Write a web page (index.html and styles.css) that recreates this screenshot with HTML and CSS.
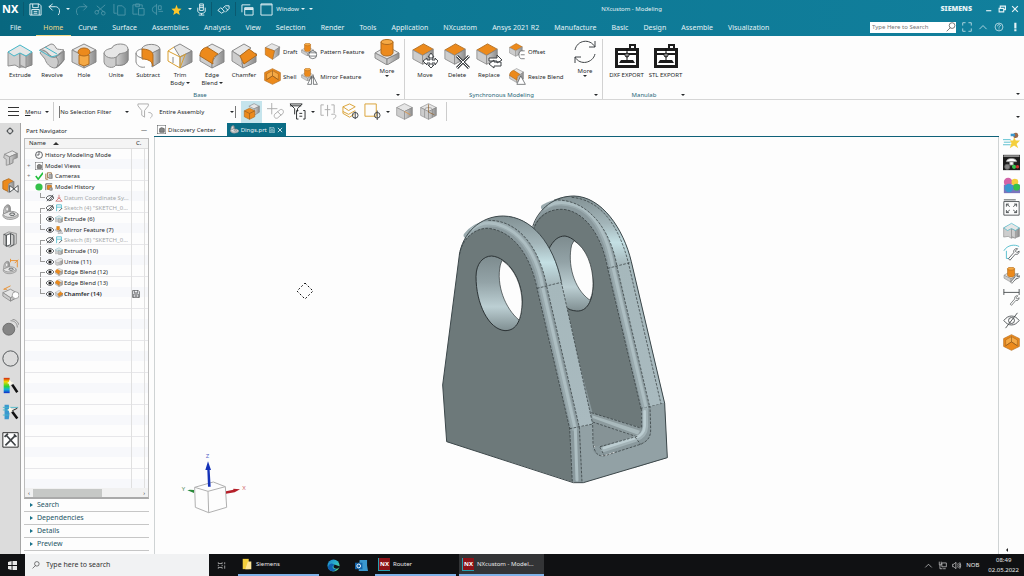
FILE: index.html
```
<!DOCTYPE html>
<html lang="en">
<head>
  <meta charset="UTF-8" />
  <meta name="viewport" content="width=device-width, initial-scale=1" />
  <title>NXcustom - Modeling</title>
  <link rel="stylesheet" href="styles.css">
</head>
<body>
  <svg class="sprite" aria-hidden="true">
    <defs>
      <linearGradient id="steel" x1="0" y1="0" x2="1" y2="0">
        <stop offset="0" stop-color="#d0d0d0" /><stop offset="1" stop-color="#8c8c8c" />
      </linearGradient>
      <linearGradient id="bore" x1="0" y1="0" x2="0" y2="1">
        <stop offset="0" stop-color="#7d8b8e" /><stop offset=".35" stop-color="#93a3a7" />
        <stop offset=".68" stop-color="#bccfd3" /><stop offset="1" stop-color="#7f8e91" />
      </linearGradient>
      <linearGradient id="rim" x1="0" y1="0" x2="0" y2="1">
        <stop offset="0" stop-color="#829194" /><stop offset=".13" stop-color="#a3b5b9" />
        <stop offset=".22" stop-color="#c4e0e4" /><stop offset=".32" stop-color="#a6b8bc" />
        <stop offset="1" stop-color="#a9babf" />
      </linearGradient>
      <linearGradient id="heat" x1="0" y1="0" x2="0" y2="1">
        <stop offset="0" stop-color="#d21f10" /><stop offset=".25" stop-color="#f5d800" />
        <stop offset=".55" stop-color="#2fd62f" /><stop offset=".75" stop-color="#12b8d8" />
        <stop offset="1" stop-color="#1227c8" />
      </linearGradient>
      <linearGradient id="edge" x1="0" y1="0" x2="1" y2="1">
        <stop offset="0" stop-color="#1b7fd0" /><stop offset=".5" stop-color="#2bb5c9" /><stop offset="1" stop-color="#6bd66a" />
      </linearGradient>
    </defs>

    <symbol id="cube" viewBox="0 0 26 26">
      <path class="top" d="M13 1 25 7 13 13 1 7z" /><path class="left" d="M1 7l12 6v12L1 19z" /><path class="right" d="M25 7l-12 6v12l12-6z" /><path class="line orange-line" d="M13 13l9 5" />
    </symbol>
    <symbol id="cube-round" viewBox="0 0 26 26">
      <path class="top" d="M13 1 25 7 13 13 1 7z" /><path class="left" d="M1 7l12 6v12L1 19z" /><path class="right" d="M25 7l-12 6v12l12-6z" />
      <path class="line" d="M7 10v12M19 10v12M7 10c0-4 12-4 12 0" /><path class="line brown" d="M13 2v12l9 4" />
    </symbol>
    <symbol id="cube-stack" viewBox="0 0 26 26">
      <path class="top" d="M9 5l8-4 8 4-8 4z" /><path class="right" d="M25 5v9l-8 5V9z" /><path class="orange" d="M2 12l8-4 8 4v9l-8 4-8-4z" /><path class="line brown" d="M2 12l8 4 8-4M10 16v9" />
    </symbol>
    <symbol id="orange-top" viewBox="0 0 26 26">
      <path class="orange" d="M13 1l11 6-12 7L1 8z" /><path class="left" d="M1 8l11 6v10L1 18z" /><path class="right" d="M24 7l-12 7v10l12-6z" />
    </symbol>
    <symbol id="extrude" viewBox="0 0 26 26">
      <path class="left" d="M1 9l7-3 5 4v15l-5-3-7 1z" /><path class="right" d="M13 10l12-1v13l-6 2-6 0z" /><path class="left" d="M13 10l6 3v12l-6-3z" />
      <path class="top cyan" d="M1 9 13 2l12 7-6 4-6-3-6 3z" />
    </symbol>
    <symbol id="revolve" viewBox="0 0 26 26">
      <path class="left" d="M1 10c2-4 6-2 8 1s6 4 8 3l8-6v9c-2 3-5 7-9 8-5 0-9-5-10-9z" /><path class="top" d="M1 7 12 1c3 0 4 2 5 4s5 1 8 2l-9 7c-6 1-7-8-15-7z" />
      <path class="line cyan" d="M0 7l12 7 12-3M6 4l12 7" /><path class="right" d="M25 8v9l-8 8c3-4 3-8 0-11z" />
    </symbol>
    <symbol id="hole" viewBox="0 0 26 26">
      <path class="top" d="M13 1 25 7 13 13 1 7z" /><path class="left" d="M1 7l12 6v12L1 19z" /><path class="right" d="M25 7l-12 6v12l12-6z" />
      <path class="amber" d="M8 12h10v9l-5 2-5-2z" /><ellipse class="orange" cx="13" cy="9" rx="6" ry="4" />
    </symbol>
    <symbol id="unite" viewBox="0 0 26 26">
      <path class="left" d="M1 10v9c1 6 10 7 12 3 4 1 11 0 12-5V6z" /><path class="right" d="M13 13v9c4 1 11 0 12-5V6z" />
      <path class="top" d="M1 10c1-4 6-4 8-5 1-5 16-6 16 1 0 4-6 4-9 5-2 6-14 5-15-1z" />
    </symbol>
    <symbol id="subtract" viewBox="0 0 26 26">
      <path class="top" d="M7 5c3-5 17-5 18 1l-8 5-10-4z" /><path class="right" d="M25 6v13l-8 5V10z" /><path class="orange" d="M7 6c5 0 11 2 11 6v11c-1-5-5-7-11-7z" />
      <path class="line" d="M7 6c-8 1-8 8 1 9M1 10v9c1 4 5 6 9 5" />
    </symbol>
    <symbol id="trim" viewBox="0 0 26 26">
      <path class="top" d="M7 4l6-3 12 7-12 6z" /><path class="right" d="M25 8v11l-12 6V14z" />
      <path class="line gold" d="M7 4 1 8v10l12 7V14L1 8M13 14l6-3M13 25l5-13" /><path class="line" d="M6 14v6" />
    </symbol>
    <symbol id="blend" viewBox="0 0 26 26">
      <path class="top" d="M8 4l5-3 12 6-8 7z" /><path class="left" d="M1 12l12 8v5L1 18z" /><path class="right" d="M25 7v12l-12 6v-6l4-6z" /><path class="orange" d="M8 4l11 7c-4 2-6 5-5 10L1 13c0-5 3-8 7-9z" />
    </symbol>
    <symbol id="chamfer" viewBox="0 0 26 26">
      <path class="top" d="M1 8 13 1l7 4L9 13z" /><path class="left" d="M1 8l9 6 2 11L1 18z" /><path class="right" d="M25 10v9l-13 6-1-5z" /><path class="orange" d="M18 6l8 6-13 9-4-8z" />
    </symbol>
    <symbol id="draft" viewBox="0 0 26 26">
      <path class="top" d="M2 7 12 1l12 5-8 6z" /><path class="right" d="M24 6l-1 12-10 7 3-13z" /><path class="orange" d="M2 7l14 5-3 13-11-7z" />
    </symbol>
    <symbol id="shell" viewBox="0 0 26 26">
      <path class="orange" d="M13 1l12 6v12l-12 6L1 19V7z" /><path class="amber" d="M13 4l9 5v9l-9-6-9 6V9z" /><path class="line brown" d="M13 4v8M4 18l9-6 9 6" />
    </symbol>
    <symbol id="boss" viewBox="0 0 26 26">
      <path class="top" d="M13 7l12 7-12 6-12-6z" /><path class="left" d="M1 14l12 6v6L1 19z" /><path class="right" d="M25 14l-12 6v6l12-7z" />
      <path class="orange" d="M7 3v11c1 4 11 4 12 0V3z" /><ellipse class="amber" cx="13" cy="3" rx="6" ry="2.500" />
    </symbol>
    <symbol id="pattern" viewBox="0 0 26 26">
      <use href="#boss" width="20" height="20" /><circle class="paper dark" cx="18" cy="18" r="6" /><path class="line dark" d="M12 15h12M12 20h12" />
    </symbol>
    <symbol id="mirror" viewBox="0 0 26 26">
      <use href="#boss" width="20" height="20" /><path class="paper dark" d="M16 13v12h-6zM19 13v12h6z" />
    </symbol>
    <symbol id="move" viewBox="0 0 26 26">
      <use href="#orange-top" width="23" height="23" /><path class="paper dark" d="M19 10l3 4h-2v3h3v-2l3 3-3 4v-2h-3v2h2l-3 3-3-3h2v-2h-3v2l-4-4 4-3v2h3v-3h-2z" />
    </symbol>
    <symbol id="delete" viewBox="0 0 26 26">
      <use href="#orange-top" width="23" height="23" /><path class="line dark wide-line" d="M13 13l12 12M25 13L13 25" /><path class="halo" d="M13 13l12 12M25 13L13 25" />
    </symbol>
    <symbol id="replace" viewBox="0 0 26 26">
      <use href="#orange-top" width="23" height="23" /><path class="paper dark" d="M13 15h8v-3l5 5-5 3v-2h-8zM25 19h-7v-2l-5 4 5 4v-2h7z" />
    </symbol>
    <symbol id="offset" viewBox="0 0 26 26">
      <use href="#orange-top" width="22" height="22" /><path class="paper dark" d="M24 12h-5c-5 0-5 12 0 12h5" /><path class="line dark" d="M18 18h6" />
    </symbol>
    <symbol id="resize" viewBox="0 0 26 26">
      <use href="#blend" width="23" height="23" /><path class="paper dark" d="M18 12l7 13H12z" />
    </symbol>
    <symbol id="cycle" viewBox="0 0 26 26">
      <path class="line dark" d="M3 11C5 1 18-1 23 8M23 2v6h-6M23 15c-2 9-15 12-20 3M3 24v-6h6" />
    </symbol>
    <symbol id="printer" viewBox="0 0 26 26">
      <path class="black-fill" d="M1 5h24v20H1zM15 1h7v5h-2V3h-3v3h-2z" /><path class="clear" d="M4 8h18v2H4zM4 12h18v10H4z" />
      <path class="black-fill" d="M7 17h12l2 3H5z" /><circle class="paper black" cx="13" cy="12" r="2" /><path class="line black" d="M13 7v10M13 8V5" />
    </symbol>

    <symbol id="save" viewBox="0 0 14 14"><path class="stroke" d="M1 1h10l2 2v10H1zM4 1v4h6V1M3 13V7h8v6M5 9h4M5 11h4" /></symbol>
    <symbol id="undo" viewBox="0 0 14 14"><path class="stroke" d="M5 1 1 4l4 4M1 4h7c4 0 6 5 3 9" /></symbol>
    <symbol id="redo" viewBox="0 0 14 14"><path class="stroke" d="M9 1l4 3-4 4M13 4H6c-4 0-6 5-3 9" /></symbol>
    <symbol id="cut" viewBox="0 0 14 14"><path class="stroke" d="M12 2 4 9M3 3l8 7" /><circle class="stroke" cx="3" cy="10" r="2" /><circle class="stroke" cx="10" cy="11" r="2" /></symbol>
    <symbol id="copy" viewBox="0 0 14 14"><path class="stroke" d="M1 1v10h3M5 3h5l3 3v7H5z" /></symbol>
    <symbol id="paste" viewBox="0 0 14 14"><path class="stroke" d="M6 12H1V2h10v3M4 1h4v3H4zM7 6h6v7H7z" /></symbol>
    <symbol id="repeat" viewBox="0 0 14 14"><path class="stroke" d="M6 1v12M6 3C0 3 0 11 6 11M8 3h3v4H8zM8 9h5" /></symbol>
    <symbol id="star" viewBox="0 0 14 14"><path class="star" d="M7 2l1.500 4 4 .3-3 2.500 1 4L7 10.700 3.500 12.800l1-4-3-2.500 4-.3z" /></symbol>
    <symbol id="mic" viewBox="0 0 14 14"><path class="stroke" d="M5 1h4v7H5zM3 5v4c1 3 7 3 8 0V5M7 11v2M4 13h6M5 3h4M5 5h4" /></symbol>
    <symbol id="link" viewBox="0 0 14 14"><path class="stroke" d="M1 8l3-3 4 4-3 2zM6 6l3-3h4v3l-4 4M9 5l3 3" /></symbol>
    <symbol id="cascade" viewBox="0 0 14 14"><path class="stroke" d="M1 10V2h9M4 5h9v8H4zM4 7h9M4 6h9" /></symbol>
    <symbol id="frame" viewBox="0 0 14 14"><path class="stroke" d="M1 1h12v12H1zM1 2h12" /></symbol>
    <symbol id="full" viewBox="0 0 14 14"><path class="stroke" d="M1 5V1h4M9 1h4v4M13 9v4H9M5 13H1V9" /></symbol>
    <symbol id="up" viewBox="0 0 14 14"><path class="stroke" d="M2 10l5-5 5 5" /></symbol>
    <symbol id="help" viewBox="0 0 14 14"><circle class="stroke" cx="7" cy="7" r="5.500" /><path class="stroke" d="M5 6c0-3 4-3 4-1 0 1-2 1-2 3M7 9v1.500" /></symbol>
    <symbol id="bang" viewBox="0 0 14 14"><path class="fill" d="M6 1h3v8H6zM6 10h3v3H6z" /></symbol>
    <symbol id="min" viewBox="0 0 14 14"><path class="fill" d="M2 9h9v2H2z" /></symbol>
    <symbol id="restore" viewBox="0 0 14 14"><path class="stroke bold" d="M4 5V2h9v6h-3M2 6h8v6H2z" /></symbol>
    <symbol id="close" viewBox="0 0 14 14"><path class="stroke bold" d="M2 2l10 10M12 2L2 12" /></symbol>
    <symbol id="lens" viewBox="0 0 14 14"><circle class="stroke" cx="8.500" cy="5" r="4" /><path class="stroke" d="M6 8l-5 5" /></symbol>

    <symbol id="funnel" viewBox="0 0 18 18"><path class="stroke" d="M1 1h11v2L8 8v7l-3-2V8L1 3zM12 10c5 0 5 4 2 6" /></symbol>
    <symbol id="snap" viewBox="0 0 18 18"><path class="stroke" d="M0 6h11M5 0v12M8 12l6-5c3-1 4 2 3 4l-6 5c-3 1-4-2-3-4zM11 9l4 4" /></symbol>
    <symbol id="funnel-box" viewBox="0 0 18 18"><path class="stroke" d="M1 1h13l-5 5v3M1 1l5 5v6M1 3h12M10 8h-2v9h2M15 8h2v9h-2M11 11h3M11 14h3" /></symbol>
    <symbol id="brackets" viewBox="0 0 18 18"><path class="stroke" d="M4 2H1v11h3M5 7h6M8 2v12M12 2h3v9M12 12c6-1 6 3 2 5" /></symbol>
    <symbol id="wire" viewBox="0 0 18 18"><path class="line gold" d="M1 4l7-3 6 3-7 4zM1 4v7l7 4 5-3M1 9l6 3 7-4" /><circle class="line dark" cx="14" cy="13" r="3" /><path class="line dark" d="M14 9v8" /></symbol>
    <symbol id="rect" viewBox="0 0 18 18"><path class="line gold" d="M1 1h12v13H1z" /><circle class="line dark" cx="14" cy="13" r="3" /><path class="line dark" d="M14 8v10" /></symbol>

    <symbol id="gear" viewBox="0 0 20 20"><circle class="line dark thick" cx="10" cy="10" r="5" /><path class="line dark" d="M10 2v4M10 14v4M2 10h4M14 10h4" /></symbol>
    <symbol id="assembly" viewBox="0 0 20 20"><path class="left" d="M3 5l6 3v9l-4 1v-7l-3-2z" /><path class="top" d="M3 5l9-4 6 3-9 4z" /><path class="right" d="M18 4v5l-5 2v4l-4 2V8z" /></symbol>
    <symbol id="constraint" viewBox="0 0 20 20"><path class="orange" d="M1 5l7-3 5 3v9l-6 3-6-3z" /><path class="right" d="M8 8l6-3v9l-7 4z" /><path class="paper dark" d="M9 10v8l10-8v8z" /></symbol>
    <symbol id="part" viewBox="0 0 20 20">
      <path class="right" d="M2 13C1 8 3 1 7 1c3 0 3 4 3 8l-1 4z" /><ellipse class="paper" cx="6" cy="6" rx="1.500" ry="2.500" />
      <path class="left" d="M1 13c0 6 12 7 18 2v-3L8 9z" /><path class="top" d="M1 12l7-3c4-1 9 0 11 3-4 5-16 5-18 0z" /><ellipse class="line dark" cx="12" cy="12" rx="3" ry="1.500" />
    </symbol>
    <symbol id="book" viewBox="0 0 20 20"><path class="left" d="M2 4l6-3 9 2v12l-8 4-7-3z" /><path class="paper dark" d="M5 5l5-2v13l-5 2z" /><path class="line dark" d="M2 4l3 1v13M10 3l4 2v11l-4 2" /></symbol>
    <symbol id="part-new" viewBox="0 0 20 20"><use href="#part" y="3" width="18" height="17" /><path class="line orange-line" d="M10 3h8v8M10 1v4M15 6l4-4" /></symbol>
    <symbol id="tray" viewBox="0 0 20 20"><path class="top" d="M1 9l9-4 9 5-9 5z" /><path class="left" d="M1 9l9 6v4l-9-6z" /><path class="right" d="M19 10l-9 5v4l9-5z" /><path class="line orange-line" d="M2 5l8-4M2 5h4" /><circle class="paper" cx="16" cy="12" r="4" /></symbol>
    <symbol id="ball" viewBox="0 0 20 20"><circle class="grey-ball" cx="8" cy="12" r="7" /><path class="line" d="M10 2c5 0 8 3 8 8M12 0c5 1 7 4 8 7" /></symbol>
    <symbol id="clock-big" viewBox="0 0 20 20"><circle class="line dark" cx="10" cy="10" r="9" /></symbol>
    <symbol id="spectrum" viewBox="0 0 20 20"><path fill="url(#heat)" d="M2 1h7v18H2z" /><path class="star-light" d="M9 3l2 3 3 1-3 1-2 3-1-3-2-1 2-1z" /><path class="line black wide-line" d="M12 9l6 9" /></symbol>
    <symbol id="flow" viewBox="0 0 20 20"><path class="blue" d="M3 1h5l1 9-1 8H3z" /><path class="line cyan" d="M1 4h18M1 7h10M1 13h7" /><path class="star-light" d="M9 3l2 3 3 1-3 1-2 3-1-3-2-1 2-1z" /><path class="line black wide-line" d="M12 9l6 8" /><path class="line black" d="M12 8l6-3" /></symbol>
    <symbol id="tools" viewBox="0 0 20 20"><path class="paper black" d="M1 2h18v17H1z" /><path class="line dark thick" d="M4 17L15 6M5 5l11 12M3 7l4-4M14 4l3 3" /></symbol>

    <symbol id="runner" viewBox="0 0 20 20"><path class="line cyan" d="M0 9h9M1 12h8M0 15h9" /><path class="yellow" d="M13 6l2 4h5l-4 4 2 5-5-3-5 3 2-6-2-3h4z" /><circle class="brown-fill" cx="15" cy="4" r="3" /><path class="blue" d="M9 2h5v3H9z" /></symbol>
    <symbol id="render" viewBox="0 0 20 20"><path class="black-fill" d="M0 1h20v18H0z" /><path class="left" d="M1 2h18v1H1z" /><path class="paper" d="M4 9c0-5 12-5 12 0zM8 9h4v4H8z" /><circle class="green" cx="13" cy="15" r="2.500" /><circle class="red" cx="17" cy="15" r="2" /><circle class="grey-ball" cx="5" cy="15" r="3" /></symbol>
    <symbol id="balls" viewBox="0 0 20 20"><path class="violet" d="M1 9h19v10H1z" /><circle class="pink" cx="6" cy="6" r="5" /><circle class="yellow" cx="14" cy="6" r="4" /><circle class="green" cx="16" cy="12" r="4" /><circle class="blue" cx="7" cy="13" r="5" /></symbol>
    <symbol id="fit" viewBox="0 0 20 20"><path class="line dark" d="M1 3h18v16H1zM1 1h14M4 6l4 3M4 9V6h3M16 6l-4 3M16 9V6h-3M4 16l4-3M4 13v3h3M16 16l-4-3M16 13v3h-3" /></symbol>
    <symbol id="wrench" viewBox="0 0 20 20"><path class="paper dark" d="M6 17l7-8c-1-4 3-6 5-5l-3 3 2 2 3-2c0 4-3 5-5 4l-7 8z" /></symbol>
    <symbol id="sketch-wrench" viewBox="0 0 20 20"><path class="line cyan" d="M1 8C5 1 14 0 19 3M4 8v9h6" /><use href="#wrench" y="2" width="20" height="18" /></symbol>
    <symbol id="boss-wrench" viewBox="0 0 20 20"><use href="#boss" width="19" height="18" /><use href="#wrench" x="4" y="5" width="16" height="15" /></symbol>
    <symbol id="dim-wrench" viewBox="0 0 20 20"><path class="line dark" d="M1 0v7M19 0v7M1 4h18" /><use href="#wrench" x="3" y="5" width="17" height="15" /></symbol>
    <symbol id="hidden" viewBox="0 0 20 20"><path class="line dark" d="M1 10c5-7 13-7 18 0-5 7-13 7-18 0zM3 19L17 1" /><circle class="line dark" cx="10" cy="10" r="3.500" /></symbol>

    <symbol id="eye" viewBox="0 0 10 10"><path class="line dark" d="M0 5c3-4 7-4 10 0-3 4-7 4-10 0z" /><circle class="black-fill" cx="5" cy="5" r="2" /></symbol>
    <symbol id="eye-off" viewBox="0 0 10 10"><path class="line dark" d="M0 5c3-4 7-4 10 0-3 4-7 4-10 0zM1 9l8-8M4 9l5-6" /></symbol>
    <symbol id="clock" viewBox="0 0 10 10"><circle class="line dark" cx="5" cy="5" r="4.300" /><path class="line dark" d="M5 1v4H2" /></symbol>
    <symbol id="views" viewBox="0 0 10 10"><path class="paper dark" d="M0 0h10v10H0z" /><path class="grey-ball" d="M3 4l2-1 3 1v4H3z" /></symbol>
    <symbol id="check" viewBox="0 0 10 10"><path class="line green-line" d="M1 5l3 4 6-8" /></symbol>
    <symbol id="camera" viewBox="0 0 10 10"><path class="line brown" d="M1 2v7h3M3 1h5v6H3z" /><path class="right" d="M5 3h4v5H5z" /></symbol>
    <symbol id="led" viewBox="0 0 10 10"><circle class="green" cx="5" cy="5" r="4.500" /></symbol>
    <symbol id="history" viewBox="0 0 10 10"><path class="line dark" d="M1 9V1h8" /><path class="orange" d="M3 3h5v5H3z" /><path class="right" d="M6 6h3v3H6z" /></symbol>
    <symbol id="datum" viewBox="0 0 10 10"><path class="line red-line" d="M5 1v4L1 9h8L5 5M3 5h4" /></symbol>
    <symbol id="sketch" viewBox="0 0 10 10"><path class="line cyan" d="M2 9V1h6v5M2 4h6" /><path class="line dark" d="M5 9l4-4" /></symbol>
  </svg>

  <header class="titlebar">
    <div class="title-row">
      <div class="quick">
        <strong class="logo">NX</strong>
        <i class="bar"></i>
        <button aria-label="Save"><svg><use href="#save" /></svg></button>
        <button aria-label="Undo"><svg><use href="#undo" /></svg></button>
        <i class="caret"></i>
        <button class="faint" aria-label="Redo"><svg><use href="#redo" /></svg></button>
        <button class="faint" aria-label="Cut"><svg><use href="#cut" /></svg></button>
        <button class="faint" aria-label="Copy"><svg><use href="#copy" /></svg></button>
        <button class="faint" aria-label="Paste"><svg><use href="#paste" /></svg></button>
        <button class="faint" aria-label="Repeat"><svg><use href="#repeat" /></svg></button>
        <button class="favourites" aria-label="Favourites"><svg><use href="#star" /></svg></button>
        <i class="caret"></i>
        <button class="voice" aria-label="Voice"><svg><use href="#mic" /></svg></button>
        <i class="bar"></i>
        <button aria-label="Touch"><svg><use href="#link" /></svg></button>
        <i class="bar"></i>
        <button aria-label="Switch window"><svg><use href="#cascade" /></svg></button>
        <button class="window"><svg><use href="#frame" /></svg>Window <i class="caret"></i></button>
        <i class="caret"></i>
      </div>
      <h1>NXcustom - Modeling</h1>
      <div class="brand">
        <strong>SIEMENS</strong>
        <button aria-label="Minimize"><svg><use href="#min" /></svg></button>
        <button aria-label="Restore"><svg><use href="#restore" /></svg></button>
        <button aria-label="Close"><svg><use href="#close" /></svg></button>
      </div>
    </div>
    <div class="tab-row">
      <nav>
        <a href="#file" class="file">File</a>
        <a href="#home" class="current">Home</a>
        <a href="#curve">Curve</a>
        <a href="#surface">Surface</a>
        <a href="#assemblies">Assemblies</a>
        <a href="#analysis">Analysis</a>
        <a href="#view">View</a>
        <a href="#selection">Selection</a>
        <a href="#render">Render</a>
        <a href="#tools">Tools</a>
        <a href="#application">Application</a>
        <a href="#nxcustom">NXcustom</a>
        <a href="#ansys">Ansys 2021 R2</a>
        <a href="#manufacture">Manufacture</a>
        <a href="#basic">Basic</a>
        <a href="#design">Design</a>
        <a href="#assemble">Assemble</a>
        <a href="#visualization">Visualization</a>
      </nav>
      <div class="tab-tools">
        <label class="finder"><input type="search" placeholder="Type Here to Search" aria-label="Command finder" /><svg><use href="#lens" /></svg></label>
        <button aria-label="Full screen"><svg><use href="#full" /></svg></button>
        <button aria-label="Minimize ribbon"><svg><use href="#up" /></svg></button>
        <button aria-label="Help"><svg><use href="#help" /></svg></button>
        <button aria-label="Alerts"><svg><use href="#bang" /></svg></button>
      </div>
    </div>
  </header>

  <section class="ribbon">
    <div class="group base">
      <div class="tools">
        <button class="big"><svg><use href="#extrude" /></svg>Extrude</button>
        <button class="big"><svg><use href="#revolve" /></svg>Revolve</button>
        <button class="big"><svg><use href="#hole" /></svg>Hole</button>
        <button class="big"><svg><use href="#unite" /></svg>Unite</button>
        <button class="big"><svg><use href="#subtract" /></svg>Subtract</button>
        <button class="big"><svg><use href="#trim" /></svg>Trim<span>Body <i class="caret"></i></span></button>
        <button class="big"><svg><use href="#blend" /></svg>Edge<span>Blend <i class="caret"></i></span></button>
        <button class="big"><svg><use href="#chamfer" /></svg>Chamfer</button>
        <div class="stack">
          <button class="small"><svg><use href="#draft" /></svg>Draft</button>
          <button class="small"><svg><use href="#shell" /></svg>Shell</button>
        </div>
        <div class="stack">
          <button class="small"><svg><use href="#pattern" /></svg>Pattern Feature</button>
          <button class="small"><svg><use href="#mirror" /></svg>Mirror Feature</button>
        </div>
        <button class="big more"><svg><use href="#boss" /></svg>More<i class="caret"></i></button>
      </div>
      <footer><h2>Base</h2><i class="caret"></i></footer>
    </div>
    <div class="group sync">
      <div class="tools">
        <button class="big"><svg><use href="#move" /></svg>Move</button>
        <button class="big"><svg><use href="#delete" /></svg>Delete</button>
        <button class="big"><svg><use href="#replace" /></svg>Replace</button>
        <div class="stack">
          <button class="small"><svg><use href="#offset" /></svg>Offset</button>
          <button class="small"><svg><use href="#resize" /></svg>Resize Blend</button>
        </div>
        <button class="big more"><svg><use href="#cycle" /></svg>More<i class="caret"></i></button>
      </div>
      <footer><h2>Synchronous Modeling</h2><i class="caret"></i></footer>
    </div>
    <div class="group manulab">
      <div class="tools">
        <button class="big wide"><svg><use href="#printer" /></svg>DXF EXPORT</button>
        <button class="big wide"><svg><use href="#printer" /></svg>STL EXPORT</button>
      </div>
      <footer><h2>Manulab</h2><i class="caret"></i></footer>
    </div>
    <i class="caret ribbon-end"></i>
  </section>

  <section class="selection-bar">
    <button class="menu"><span class="burger"></span><span><u>M</u>enu</span><i class="caret"></i></button>
    <label class="picker"><select aria-label="Selection filter"><option>No Selection Filter</option></select><i class="caret"></i></label>
    <button class="dim" aria-label="Reset filter"><svg><use href="#funnel" /></svg></button>
    <label class="picker scope"><select aria-label="Selection scope"><option>Entire Assembly</option></select><i class="caret"></i></label>
    <button class="on" aria-label="Highlight hidden edges"><svg><use href="#cube-stack" /></svg></button>
    <button class="dim" aria-label="Snap"><svg><use href="#snap" /></svg></button>
    <button aria-label="Filter options"><svg><use href="#funnel-box" /></svg></button>
    <i class="caret"></i>
    <button class="dim" aria-label="Selection priority"><svg><use href="#brackets" /></svg></button>
    <button aria-label="Interior selection"><svg><use href="#wire" /></svg></button>
    <button aria-label="Rectangle selection"><svg><use href="#rect" /></svg></button>
    <i class="caret"></i>
    <button class="shade" aria-label="Shaded"><svg><use href="#cube" /></svg></button>
    <button class="shade" aria-label="Shaded with edges"><svg><use href="#cube-round" /></svg></button>
    <i class="bar"></i>
    <i class="caret bar-end"></i>
  </section>

  <main>
    <aside class="resources">
      <button class="gear" aria-label="Settings"><svg><use href="#gear" /></svg></button>
      <button aria-label="Assembly Navigator"><svg><use href="#assembly" /></svg></button>
      <button aria-label="Constraint Navigator"><svg><use href="#constraint" /></svg></button>
      <button class="active" aria-label="Part Navigator"><svg><use href="#part" /></svg></button>
      <button aria-label="Reuse Library"><svg><use href="#book" /></svg></button>
      <button aria-label="Feature templates"><svg><use href="#part-new" /></svg></button>
      <button aria-label="View Manager"><svg><use href="#tray" /></svg></button>
      <button class="apart" aria-label="Web Browser"><svg><use href="#ball" /></svg></button>
      <button aria-label="History"><svg><use href="#clock-big" /></svg></button>
      <button aria-label="System Materials"><svg><use href="#spectrum" /></svg></button>
      <button aria-label="Process Studio"><svg><use href="#flow" /></svg></button>
      <button aria-label="Roles"><svg><use href="#tools" /></svg></button>
    </aside>

    <section class="navigator">
      <div class="panel-title"><h2>Part Navigator</h2><button aria-label="Collapse">—</button></div>
      <div class="tree">
        <table>
          <thead><tr><th>Name <i class="sort"></i></th><th>C.</th><th></th></tr></thead>
          <tbody>
            <tr><td><div class="item root"><svg><use href="#clock" /></svg>History Modeling Mode</div></td><td></td><td></td></tr>
            <tr><td><div class="item root plus"><svg><use href="#views" /></svg>Model Views</div></td><td></td><td></td></tr>
            <tr><td><div class="item root plus"><svg><use href="#check" /></svg><svg><use href="#camera" /></svg>Cameras</div></td><td></td><td></td></tr>
            <tr><td><div class="item root"><svg><use href="#led" /></svg><svg><use href="#history" /></svg>Model History</div></td><td></td><td></td></tr>
            <tr class="off"><td><div class="item"><i class="branch last"></i><svg><use href="#eye-off" /></svg><svg><use href="#datum" /></svg>Datum Coordinate Sy...</div></td><td></td><td></td></tr>
            <tr class="off"><td><div class="item"><i class="branch first"></i><svg><use href="#eye-off" /></svg><svg><use href="#sketch" /></svg>Sketch (4) "SKETCH_0...</div></td><td></td><td></td></tr>
            <tr><td><div class="item"><i class="branch"></i><svg><use href="#eye" /></svg><svg><use href="#extrude" /></svg>Extrude (6)</div></td><td></td><td></td></tr>
            <tr><td><div class="item"><i class="branch last"></i><svg><use href="#eye" /></svg><svg><use href="#mirror" /></svg>Mirror Feature (7)</div></td><td></td><td></td></tr>
            <tr class="off"><td><div class="item"><i class="branch first"></i><svg><use href="#eye-off" /></svg><svg><use href="#sketch" /></svg>Sketch (8) "SKETCH_0...</div></td><td></td><td></td></tr>
            <tr><td><div class="item"><i class="branch"></i><svg><use href="#eye" /></svg><svg><use href="#extrude" /></svg>Extrude (10)</div></td><td></td><td></td></tr>
            <tr><td><div class="item"><i class="branch last"></i><svg><use href="#eye" /></svg><svg><use href="#unite" /></svg>Unite (11)</div></td><td></td><td></td></tr>
            <tr><td><div class="item"><i class="branch first"></i><svg><use href="#eye" /></svg><svg><use href="#blend" /></svg>Edge Blend (12)</div></td><td></td><td></td></tr>
            <tr><td><div class="item"><i class="branch"></i><svg><use href="#eye" /></svg><svg><use href="#blend" /></svg>Edge Blend (13)</div></td><td></td><td></td></tr>
            <tr class="latest"><td><div class="item"><i class="branch last"></i><svg><use href="#eye" /></svg><svg><use href="#chamfer" /></svg>Chamfer (14)</div></td><td><svg><use href="#save" /></svg></td><td></td></tr>
          </tbody>
        </table>
        <div class="scroll"><span>‹</span><i></i><span>›</span></div>
      </div>
      <ul class="sections">
        <li><button>Search</button></li>
        <li><button>Dependencies</button></li>
        <li><button>Details</button></li>
        <li><button>Preview</button></li>
      </ul>
    </section>

    <section class="graphics">
      <div class="documents">
        <a href="#discovery"><svg><use href="#views" /></svg>Discovery Center</a>
        <a href="#dings" class="open"><svg><use href="#part" /></svg>Dings.prt <svg class="tiny"><use href="#save" /></svg><svg class="tiny"><use href="#close" /></svg></a>
      </div>
      <div class="canvas">
        <svg class="model" viewBox="0 0 810 960" role="img" aria-label="Clevis bracket">
          <!-- rear lug -->
          <path class="round" d="M338 145C355 85 405 48 462 48 545 50 610 145 634 245L734 670 742 833 640 865 520 760 400 240z" />
          <path class="shine-wide" d="M372 82C405 62 440 66 468 76 530 100 562 175 577 262L678 690" />
          <path class="shine" d="M385 77C410 64 440 66 468 76 530 100 564 175 579 262L680 690" />
          <path fill="url(#rim)" d="M402 60C510 55 575 160 591 260L689 682 734 670 634 245C610 145 545 50 462 48 438 48 416 52 402 60z" />
          <path class="face" d="M338 150C350 105 385 87 430 88 495 95 545 165 563 265L663 685 665 745 518 700 400 260z" />
          <path class="seam" d="M340 150C355 105 390 86 430 88 495 95 545 165 563 265L663 685M402 60C510 55 575 160 591 260L689 680" />
          <path class="seam" d="M563 265L634 247M661 686L734 670M455 52C550 60 600 150 625 248L723 672" />
          <path class="bore" d="M386 208C400 180 415 168 435 168 480 175 518 250 519 310 519 365 500 395 470 393 455 392 445 388 436 380L415 300z" />
          <path class="void" d="M462 182C500 205 519 260 519 310 519 335 515 350 509 360 460 325 442 250 455 195z" />
          <!-- slot floor -->
          <path class="slope" d="M514 698L668 745 652 776 518 726z" />
          <path class="slope-light" d="M516 706L660 752 654 764 518 714z" />
          <path class="floor" d="M518 726L650 774 655 795 545 815 518 795z" />
          <path class="seam" d="M514 698L665 745M518 726L650 770" />
          <!-- end face -->
          <path class="end" d="M480 742L518 730 520 790C524 820 535 830 555 827L655 795C685 785 693 770 692 745L690 680 734 670 742 833 490 908 480 906z" />
          <path class="lip" d="M677 686L678 740C678 762 669 774 648 781L552 812C540 815 533 812 528 800" />
          <path class="lip-mid" d="M675 690L676 740C675 760 666 770 646 777L550 808" />
          <path class="lip-shine" d="M674 694L674 738C673 758 664 768 644 775L552 804" />
          <path class="seam" d="M518 735L519 790C524 822 535 830 555 827L655 795C685 785 693 770 692 745L690 680M665 686L665 745M645 771L663 794M540 800L655 768M540 802L553 827" />
          <!-- front lug -->
          <path class="round" d="M118 225C128 160 180 108 250 108 335 110 400 190 424 305L518 732 480 742 486 908 457 906 300 400z" />
          <path class="shine-wide" d="M140 166C170 128 215 124 250 139 312 165 352 235 366 322L463 744" />
          <path class="shine" d="M155 148C185 124 220 126 250 139 312 165 354 235 368 322L465 744" />
          <path fill="url(#rim)" d="M205 121C300 120 360 210 380 318L478 742 518 732 424 307C400 190 335 110 250 108 232 108 217 113 205 121z" />
          <path class="face" d="M80 785L68 615 118 225C125 180 160 145 202 145 275 150 330 220 351 325L449 745 457 906z" />
          <path class="shine" d="M466 748L471 900" />
          <path class="seam" d="M118 225C125 180 160 145 202 145 275 150 330 220 351 325L449 745 457 905M205 121C300 120 360 210 380 318L478 742 486 906" />
          <path class="seam" d="M351 325L424 307M449 746L518 732M424 307L518 732" />
          <path class="bore" d="M168 290C168 250 190 228 215 228 265 232 306 300 306 360 306 420 290 452 255 452 205 448 168 370 168 290z" />
          <path class="void" d="M246 241C285 265 306 320 306 365 306 390 302 408 297 420 255 385 228 315 241 255z" />
          <path class="outline" d="M118 225L68 615 80 785 460 908 490 908 742 833 734 670 634 245C610 145 545 50 462 48 405 48 355 85 338 140M118 225C128 160 180 108 250 108 335 110 400 190 424 305" />
        </svg>
        <svg class="cursor" viewBox="0 0 18 18"><path class="line black" d="M9 1l8 8-8 8-8-8z" /></svg>
        <svg class="triad" viewBox="540 450 210 200" role="img" aria-label="View triad">
          <path class="box" d="M584 562L640 546 676 560 624 574zL586 622 626 638 680 622 676 560M624 574L626 638" />
          <path class="axis-z" d="M624 560L622 510 616 510 624 484 633 510 629 510 632 560z" />
          <path class="axis-x" d="M678 574L700 569 700 566 720 568 704 577 678 581z" />
          <path class="axis-y" d="M582 570L570 569 562 571 582 579z" />
          <text class="z" x="617" y="474">Z</text><text class="x" x="727" y="570">X</text><text class="y" x="545" y="572">Y</text>
        </svg>
      </div>
    </section>

    <aside class="shortcuts">
      <button aria-label="Start"><svg><use href="#runner" /></svg></button>
      <button aria-label="Render"><svg><use href="#render" /></svg></button>
      <button aria-label="Materials"><svg><use href="#balls" /></svg></button>
      <button aria-label="Fit"><svg><use href="#fit" /></svg></button>
      <button aria-label="Extrude"><svg><use href="#extrude" /></svg></button>
      <button aria-label="Edit sketch"><svg><use href="#sketch-wrench" /></svg></button>
      <button aria-label="Edit feature"><svg><use href="#boss-wrench" /></svg></button>
      <button aria-label="Edit dimension"><svg><use href="#dim-wrench" /></svg></button>
      <button aria-label="Hide"><svg><use href="#hidden" /></svg></button>
      <button aria-label="Shell"><svg><use href="#shell" /></svg></button>
      <i class="expand"></i>
    </aside>
  </main>

  <footer class="taskbar">
    <button class="start" aria-label="Start menu"><svg viewBox="0 0 10 10"><path class="fill" d="M0 1l4-1v4.500H0zM5 0h5v4.500H5zM0 5.500h4V10L0 9zM5 5.500h5V10H5z" /></svg></button>
    <label class="finder"><svg><use href="#lens" /></svg><input type="search" placeholder="Type here to search" aria-label="Windows search" /></label>
    <button class="view" aria-label="Task View"><svg viewBox="0 0 14 14"><path class="stroke" d="M2 2v2h6V2M2 12v-2h6v2M2 6v2M8 6v2M12 2v3M12 7v5" /></svg></button>
    <button class="task"><svg viewBox="0 0 14 14"><path class="yellow" d="M2 1h7v12H2z" /><path class="folder" d="M8 4h4v9H5z" /></svg>Siemens</button>
    <button class="pin" aria-label="Edge"><svg viewBox="0 0 14 14"><circle fill="url(#edge)" cx="7" cy="7" r="6.500" /><path class="deep" d="M1 9c1-5 6-5 7-2-3 0-3 4 2 4-3 4-9 2-9-2z" /><path class="cut-out" d="M7 8c1-1 1-2 1-2l6 2-2 2c-2 1-5 0-5-2z" /></svg></button>
    <button class="pin" aria-label="Outlook"><svg viewBox="0 0 14 14"><path class="blue" d="M5 1h8v6l1 6H4z" /><path class="navy" d="M0 4h8v7H0z" /><circle class="ring" cx="4" cy="7.500" r="2" /></svg></button>
    <button class="task nx"><span class="tile">NX</span>Router</button>
    <button class="task nx focused"><span class="tile">NX</span>NXcustom - Model...</button>
    <div class="tray">
      <svg><use href="#up" /></svg>
      <svg viewBox="0 0 14 14"><path class="stroke" d="M2 1v5h3V1M3 6v6h4M6 3h7v6H6zM8 12h4" /></svg>
      <svg viewBox="0 0 14 14"><path class="stroke" d="M1 5h2l3-3v10L3 9H1zM8 4c2 2 2 4 0 6M10 3c3 2 3 6 0 8M12 2c2 3 2 7 0 10" /></svg>
      <span>NOB</span>
      <time>08:49<br>02.05.2022</time>
    </div>
  </footer>
</body>
</html>
```

FILE: styles.css
```
* {
  box-sizing: border-box;
}

body {
  margin: 0;
  height: 100vh;
  display: flex;
  flex-direction: column;
  overflow: hidden;
  background: #fdfdfd;
  color: #26292b;
  font: 6px/8px "Noto Sans", "Open Sans", sans-serif;
}

h1, h2, ul {
  margin: 0;
  padding: 0;
  font: inherit;
  list-style: none;
}

button, input, select {
  margin: 0;
  padding: 0;
  border: 0;
  background: none;
  color: inherit;
  font: inherit;
}

button {
  display: flex;
  align-items: center;
  justify-content: center;
  flex: none;
}

a {
  color: inherit;
  text-decoration: none;
}

svg {
  display: block;
  flex: none;
  overflow: visible;
}

.sprite {
  position: absolute;
  width: 0;
  height: 0;
}

.caret {
  flex: none;
  border: 2px solid transparent;
  border-top-color: currentColor;
  border-bottom: 0;
}

/* icon paint */
.top { fill: #e6e6e6; stroke: #8b8b8b; }
.left { fill: #cdcdcd; stroke: #909090; }
.right { fill: url(#steel); stroke: #868686; }
.orange { fill: #ec8a1c; stroke: #b06a1c; }
.amber { fill: #f5a945; stroke: #b06a1c; }
.paper { fill: #fff; stroke: #999; }
.clear { fill: #fff; }
.line { fill: none; stroke: #888; }
.dark { stroke: #3f4346; }
.black { stroke: #111; }
.cyan { stroke: #45b7c9; }
.gold { stroke: #d9a032; }
.brown { stroke: #8e5a22; }
.orange-line { stroke: #ea8a25; }
.green-line { stroke: #1fbf3a; stroke-width: 2; }
.red-line { stroke: #d07070; }
.thick { stroke-width: 2; }
.wide-line { stroke-width: 3; }
.halo { fill: none; stroke: #fff; }
.black-fill { fill: #1c1c1c; }
.brown-fill { fill: #9b6a4c; }
.grey-ball { fill: #858585; stroke: #666; }
.green { fill: #35c14a; }
.red { fill: #c33; }
.yellow { fill: #f4cf3c; }
.folder { fill: #ffe694; }
.blue { fill: #3a98cf; }
.deep { fill: #0f5fae; }
.cut-out { fill: #101113; }
.navy { fill: #1463a8; }
.pink { fill: #d264a8; }
.violet { fill: #7a74bd; }
.ring { fill: none; stroke: #fff; }
.stroke { fill: none; stroke: currentColor; }
.bold { stroke-width: 2; }
.fill { fill: currentColor; }
.star { fill: #ffc629; }
.star-light { fill: #fffbe8; }

/* title bar */
.titlebar {
  flex: none;
  background: linear-gradient(90deg, #08677f, #0d7894 40%, #117f9c);
  color: #e6f3f6;
}

.title-row, .tab-row {
  display: flex;
  align-items: center;
  height: 18px;
}

.quick {
  flex: 1;
  display: flex;
  align-items: center;
  gap: 6px;
  padding-left: 2px;
}

.titlebar svg {
  width: 13px;
  height: 13px;
}

.logo {
  font-size: 11px;
  color: #fff;
}

.bar {
  width: 1px;
  height: 14px;
  background: #0a5a70;
}

.quick .bar, .quick .caret {
  margin: 0 -1px;
}

.quick .voice {
  margin: 0 -2px;
}

.faint {
  opacity: .3;
}

.window {
  gap: 3px;
}

.brand {
  display: flex;
  align-items: center;
  justify-content: flex-end;
  gap: 5px;
  width: 362px;
  padding-right: 5px;
}

.brand strong {
  margin-right: 8px;
  font-size: 7px;
  font-weight: 900;
}

.brand svg {
  width: 8px;
  height: 8px;
}

nav {
  flex: 1;
  display: flex;
}

nav a {
  height: 17px;
  padding: 0 8px 0 7px;
  font-size: 7px;
  line-height: 18px;
}

nav a.file {
  padding: 0 15px 0 10px;
}

nav .current {
  color: #f2d98a;
  border-bottom: 1px solid #f2d98a;
}

.tab-tools {
  display: flex;
  align-items: center;
  gap: 6px;
  padding-right: 4px;
}

.tab-tools svg {
  width: 10px;
  height: 10px;
}

.finder {
  display: flex;
  align-items: center;
  background: #fff;
  color: #444;
}

.finder input {
  flex: 1;
  min-width: 0;
  outline: 0;
  appearance: none;
}

.tab-tools .finder {
  width: 86px;
  height: 11px;
  padding-left: 2px;
}

/* ribbon */
.ribbon {
  flex: none;
  display: flex;
  height: 64px;
  border-bottom: 1px solid #d6d6d6;
}

.group {
  display: flex;
  flex-direction: column;
  justify-content: space-between;
  margin-top: 3px;
  padding-left: 4px;
  border-right: 1px solid #d2d2d2;
}

.base { width: 405px; }
.sync { width: 198px; }
.manulab { width: 86px; border-right: 0; }

.tools {
  display: flex;
}

.big {
  width: 32px;
  height: 50px;
  padding-top: 4px;
  flex-direction: column;
  justify-content: flex-start;
}

.big svg {
  width: 26px;
  height: 26px;
  margin-bottom: 2px;
}

.big span {
  display: flex;
  align-items: center;
  gap: 1px;
}

.wide {
  width: 39px;
}

.more {
  margin-left: auto;
  margin-right: 1px;
  padding-top: 0;
}

.stack {
  display: flex;
  flex-direction: column;
  gap: 8px;
  padding: 4px 0 0 4px;
}

.small {
  justify-content: flex-start;
  gap: 2px;
}

.small svg {
  width: 17px;
  height: 17px;
}

.group footer {
  display: flex;
  align-items: center;
  padding-right: 4px;
}

.group h2 {
  flex: 1;
  color: #1d6678;
  text-align: center;
}

.ribbon-end {
  margin: 57px 4px 0 auto;
}

/* selection bar */
.selection-bar {
  flex: none;
  display: flex;
  align-items: center;
  gap: 5px;
  height: 23px;
  padding-left: 8px;
}

.selection-bar svg {
  width: 17px;
  height: 17px;
}

.selection-bar .bar {
  height: 19px;
  margin-left: 3px;
  background: #ccc;
}

.bar-end {
  align-self: flex-end;
  margin: 0 4px 5px auto;
}

.shade {
  width: 19px;
}

.dim {
  color: #777;
  opacity: .6;
}

.menu {
  gap: 4px;
  height: 19px;
  padding-right: 4px;
  border-right: 1px solid #ccc;
}

.burger {
  width: 11px;
  height: 9px;
  margin-right: 2px;
  border: solid #333;
  border-width: 1px 0;
  background: linear-gradient(#333, #333) center / 100% 1px no-repeat;
}

.picker {
  display: flex;
  align-items: center;
  width: 73px;
  height: 12px;
  padding-right: 3px;
  border-left: 1px solid #777;
}

.scope {
  width: 77px;
  padding-right: 1px;
  border-left: 0;
  border-right: 1px solid #777;
}

.picker select {
  flex: 1;
  min-width: 0;
  appearance: none;
}

.on {
  width: 21px;
  height: 22px;
  background: #c5e4ec;
}

/* work area */
main {
  flex: 1;
  display: flex;
  min-height: 0;
}

.resources {
  width: 21px;
  background: #dcdcdc;
  border-right: 1px solid #a5a5a5;
}

.resources button {
  width: 20px;
  height: 27px;
}

.resources svg {
  width: 17px;
  height: 17px;
}

.resources .gear {
  height: 22px;
  padding-bottom: 7px;
}

.resources .gear svg {
  width: 10px;
  height: 10px;
}

.resources .active {
  background: #fff;
}

.resources .apart {
  margin: 7px 0 4px;
}

.navigator {
  width: 133px;
  padding: 0 5px 0 3px;
  display: flex;
  flex-direction: column;
}

.panel-title {
  display: flex;
  justify-content: space-between;
  height: 15px;
  padding: 4px 2px 0;
}

.panel-title button {
  height: 6px;
}

.tree {
  flex: 1;
  display: flex;
  flex-direction: column;
  min-height: 0;
  border: 1px solid #bcbcbc;
  border-bottom: 2px solid #aaa;
  background: repeating-linear-gradient(#fdfdfd 0 10px, #f7f8fb 10px 20px, #fdfdfd 20px 31px, #e7e7ea 31px 32px) 0 10px;
}

.tree table {
  flex: 1;
  width: 100%;
  min-height: 0;
  display: flex;
  flex-direction: column;
  background:
    linear-gradient(#e0e0e0, #e0e0e0) 106px 0 / 1px 100% no-repeat,
    linear-gradient(#e0e0e0, #e0e0e0) 119px 0 / 1px 100% no-repeat;
}

.tree tr {
  display: grid;
  grid-template-columns: 107px 13px 1fr;
  align-items: center;
  height: 11px;
}

.tree tbody tr:nth-child(3n) {
  height: 10px;
}

.tree thead tr {
  height: 10px;
  border-bottom: 1px solid #ddd;
  background: #f4f4f4;
}

.tree th, .tree td {
  padding: 0;
  font-weight: inherit;
  text-align: left;
}

.tree th {
  padding-left: 4px;
  line-height: 9px;
}

.sort {
  display: inline-block;
  margin-left: 6px;
  border: 3px solid transparent;
  border-top: 0;
  border-bottom-color: #333;
}

.item {
  display: flex;
  align-items: center;
  gap: 1px;
  height: 10px;
  padding-left: 15px;
  white-space: nowrap;
}

.item.root {
  gap: 2px;
  padding-left: 10px;
}

.item.plus {
  padding-left: 2px;
}

.plus::before {
  content: "+";
  width: 6px;
  color: #777;
}

.tree svg {
  width: 8px;
  height: 8px;
}

.branch {
  align-self: stretch;
  flex: none;
  width: 5px;
  border-left: 1px solid #999;
}

.branch.last {
  height: 5px;
  border-bottom: 1px solid #999;
}

.branch.first {
  height: 5px;
  margin-top: 5px;
  border-top: 1px solid #999;
}

.off {
  color: #a5a8aa;
}

.latest {
  font-weight: 600;
}

.scroll {
  display: flex;
  align-items: center;
  justify-content: space-between;
  height: 9px;
  padding: 0 3px;
  background: #f1f1f1;
}

.scroll i {
  width: 69px;
  height: 8px;
  margin-right: auto;
  margin-left: 3px;
  background: #c6c8c6;
}

.sections {
  padding-bottom: 3px;
}

.sections li {
  border-bottom: 1px solid #c6c6c6;
}

.sections button {
  gap: 4px;
  height: 12px;
  padding-left: 6px;
  color: #1d5566;
  font-size: 7px;
}

.sections button::before {
  content: "";
  border: 2px solid transparent;
  border-left: 3px solid #18728a;
  border-right: 0;
}

.graphics {
  flex: 1;
  display: flex;
  flex-direction: column;
  min-width: 0;
}

.documents {
  display: flex;
  height: 14px;
  border-bottom: 1px solid #0f6179;
}

.documents a {
  display: flex;
  align-items: center;
  gap: 2px;
  padding: 0 11px 0 3px;
}

.documents svg {
  width: 9px;
  height: 9px;
}

.documents .open {
  padding: 0 3px;
  background: #0b6d86;
  color: #e6f3f6;
}

.documents .tiny {
  width: 6px;
  height: 6px;
}

.canvas {
  flex: 1;
  position: relative;
  border: solid #cfd3d4;
  border-width: 0 1px;
}

.model {
  position: absolute;
  left: 265px;
  top: 43px;
  width: 270px;
}

.cursor {
  position: absolute;
  left: 141px;
  top: 145px;
  width: 18px;
  stroke-dasharray: 2 2;
}

.triad {
  position: absolute;
  left: 25px;
  bottom: 37px;
  width: 70px;
}

.model path { stroke-linejoin: round; }
.face { fill: #6d797a; }
.end { fill: #92a1a5; }
.floor { fill: #869396; }
.slope { fill: #8c9a9d; }
.slope-light { fill: #a9b9bc; }
.bore { fill: url(#bore); stroke: #2b3234; stroke-width: 3; }
.void { fill: #fdfdfd; stroke: #2b3234; stroke-width: 2; }
.round { fill: #8a999d; }
.shine-wide { fill: none; stroke: #9aaaae; stroke-width: 18; stroke-linecap: round; }
.shine { fill: none; stroke: #adbec2; stroke-width: 9; stroke-linecap: round; }
.lip { fill: none; stroke: #8a999d; stroke-width: 27; }
.lip-mid { fill: none; stroke: #a2b2b6; stroke-width: 17; stroke-linecap: round; }
.lip-shine { fill: none; stroke: #bccdd1; stroke-width: 8; stroke-linecap: round; }
.seam { fill: none; stroke: #2b3234; stroke-width: 2; stroke-dasharray: 8 4; }
.outline { fill: none; stroke: #3d484b; stroke-width: 3; }

.box { fill: #fdfdfd; stroke: #b0b0b0; stroke-width: 3; }
.axis-z { fill: #1432b8; }
.axis-x { fill: #b5202a; }
.axis-y { fill: #2b8a3a; }
.triad text { font-size: 18px; }
.triad .z { fill: #5566c8; }
.triad .x { fill: #d06a6a; }
.triad .y { fill: #4c8a58; }

.shortcuts {
  width: 25px;
  height: 100%;
  padding-top: 6px;
  display: grid;
  grid-template-rows: repeat(5, 22px 23px) 1fr;
  justify-items: center;
}

.shortcuts svg {
  width: 17px;
  height: 17px;
}

.expand {
  align-self: end;
  margin: 0 10px 2px 0;
  border: 2px solid transparent;
  border-right-color: #222;
  border-left: 0;
}

/* taskbar */
.taskbar {
  flex: none;
  display: flex;
  height: 22px;
  background: #101113;
  color: #e8e8e8;
}

.start {
  width: 25px;
}

.start svg {
  width: 9px;
  height: 9px;
}

.taskbar .finder {
  width: 184px;
  gap: 6px;
  padding-left: 7px;
  background: #f1f2f3;
  color: #222;
  font-size: 7px;
}

.taskbar .finder svg {
  width: 8px;
  height: 8px;
}

.taskbar .finder input::placeholder {
  color: #333;
}

.view {
  width: 24px;
  margin-right: 5px;
}

.view svg {
  width: 9px;
  height: 9px;
}

.task {
  justify-content: flex-start;
  gap: 3px;
  width: 81px;
  padding-left: 3px;
  border-bottom: 2px solid #7fb2e8;
}

.task svg {
  width: 12px;
  height: 12px;
}

.pin {
  width: 28px;
}

.pin svg {
  width: 13px;
  height: 13px;
}

.task.nx {
  margin-right: 3px;
}

.tile {
  width: 12px;
  padding: 2px 1px;
  border-left: 1px solid #27a0b0;
  border-bottom: 1px solid #27a0b0;
  background: #8c1218;
  color: #fff;
  font-weight: 700;
}

.focused {
  width: 85px;
  background: #333436;
}

.tray {
  display: flex;
  align-items: center;
  gap: 5px;
  margin-left: auto;
  padding-right: 5px;
}

.tray svg {
  width: 9px;
  height: 9px;
}

.tray time {
  margin-left: 4px;
  line-height: 10px;
  text-align: center;
}
```
